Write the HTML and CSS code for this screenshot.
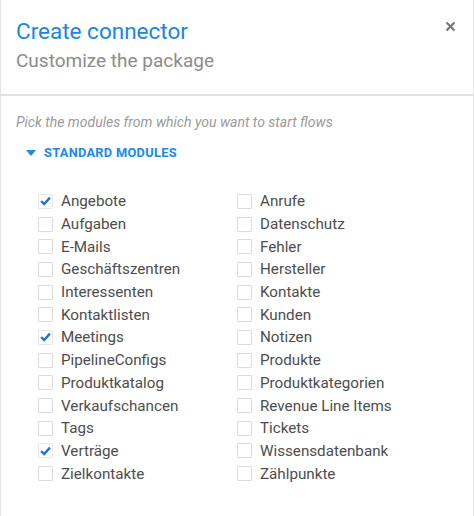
FILE: index.html
```html
<!DOCTYPE html>
<html>
<head>
<meta charset="utf-8">
<link rel="stylesheet" href="styles.css">
</head>
<body>
<div class="dialog">
  <header class="head">
    <div class="titles">
      <h1 class="title">Create connector</h1>
      <p class="subtitle">Customize the package</p>
    </div>
    <button class="close" aria-label="close">
      <svg width="11" height="11" viewBox="0 0 11 11"><path d="M1.5 1.5 L9.5 9.5 M9.5 1.5 L1.5 9.5" stroke="#777" stroke-width="2.2" stroke-linecap="butt"/></svg>
    </button>
  </header>
  <section class="body">
    <p class="hint">Pick the modules from which you want to start flows</p>
    <div class="section-head">
      <svg class="caret" width="10" height="6" viewBox="0 0 10 6"><path d="M0 0 H10 L5 6 Z" fill="#1e88e5"/></svg>
      <span>STANDARD MODULES</span>
    </div>
    <div class="grid">
      <label class="item checked"><span class="box"><svg viewBox="0 0 14 14" width="14" height="14"><path d="M2.3 7.2 L5.6 10.3 L11.8 3.4" fill="none" stroke="#1e76d0" stroke-width="2.6"/></svg></span>Angebote</label>
      <label class="item"><span class="box"></span>Anrufe</label>
      <label class="item"><span class="box"></span>Aufgaben</label>
      <label class="item"><span class="box"></span>Datenschutz</label>
      <label class="item"><span class="box"></span>E-Mails</label>
      <label class="item"><span class="box"></span>Fehler</label>
      <label class="item"><span class="box"></span>Geschäftszentren</label>
      <label class="item"><span class="box"></span>Hersteller</label>
      <label class="item"><span class="box"></span>Interessenten</label>
      <label class="item"><span class="box"></span>Kontakte</label>
      <label class="item"><span class="box"></span>Kontaktlisten</label>
      <label class="item"><span class="box"></span>Kunden</label>
      <label class="item checked"><span class="box"><svg viewBox="0 0 14 14" width="14" height="14"><path d="M2.3 7.2 L5.6 10.3 L11.8 3.4" fill="none" stroke="#1e76d0" stroke-width="2.6"/></svg></span>Meetings</label>
      <label class="item"><span class="box"></span>Notizen</label>
      <label class="item"><span class="box"></span>PipelineConfigs</label>
      <label class="item"><span class="box"></span>Produkte</label>
      <label class="item"><span class="box"></span>Produktkatalog</label>
      <label class="item"><span class="box"></span>Produktkategorien</label>
      <label class="item"><span class="box"></span>Verkaufschancen</label>
      <label class="item"><span class="box"></span>Revenue Line Items</label>
      <label class="item"><span class="box"></span>Tags</label>
      <label class="item"><span class="box"></span>Tickets</label>
      <label class="item checked"><span class="box"><svg viewBox="0 0 14 14" width="14" height="14"><path d="M2.3 7.2 L5.6 10.3 L11.8 3.4" fill="none" stroke="#1e76d0" stroke-width="2.6"/></svg></span>Verträge</label>
      <label class="item"><span class="box"></span>Wissensdatenbank</label>
      <label class="item"><span class="box"></span>Zielkontakte</label>
      <label class="item"><span class="box"></span>Zählpunkte</label>
    </div>
  </section>
</div>
</body>
</html>
```

FILE: styles.css
```css
html, body {
  margin: 0;
  padding: 0;
  background: #fff;
}
body {
  font-family: Roboto, "Liberation Sans", sans-serif;
}
.dialog {
  width: 474px;
  height: 516px;
  box-sizing: border-box;
  border-left: 1px solid #e4e4e4;
  border-right: 1px solid #e4e4e4;
  background: #fff;
}
.head {
  display: flex;
  justify-content: space-between;
  align-items: flex-start;
  padding: 16px 16px 0 15px;
  height: 96px;
  box-sizing: border-box;
  border-bottom: 2px solid #e2e2e2;
}
.title {
  margin: 0;
  font-size: 22.5px;
  font-weight: 400;
  line-height: 31px;
  color: #2086dc;
}
.subtitle {
  margin: 0;
  font-size: 19px;
  line-height: 28px;
  color: #8c8c8c;
}
.close {
  border: 0;
  background: none;
  padding: 0;
  margin-top: 5px;
  margin-right: 0;
  width: 12px;
  height: 12px;
  display: flex;
}
.body {
  padding: 17px 15px 0 15px;
}
.hint {
  margin: 0;
  font-style: italic;
  font-size: 14px;
  line-height: 19px;
  color: #9a9a9a;
}
.section-head {
  display: flex;
  align-items: center;
  gap: 8px;
  margin: 13px 0 0 10px;
  font-size: 12.8px;
  font-weight: 700;
  letter-spacing: 0.3px;
  color: #1e88e5;
  line-height: 16px;
}
.grid {
  display: grid;
  grid-template-columns: 199px 1fr;
  grid-auto-rows: 22.7px;
  margin: 29px 0 0 22px;
}
.item {
  display: flex;
  align-items: center;
  gap: 8px;
  font-size: 15.2px;
  color: #4d4d4d;
}
.box {
  width: 15px;
  height: 15px;
  box-sizing: border-box;
  border: 1px solid #dcdcdc;
  border-radius: 1px;
  display: flex;
  align-items: center;
  justify-content: center;
  flex: none;
}
.box svg {
  display: block;
}
.checked .box {
  border-color: #e8e8e8;
}
```
